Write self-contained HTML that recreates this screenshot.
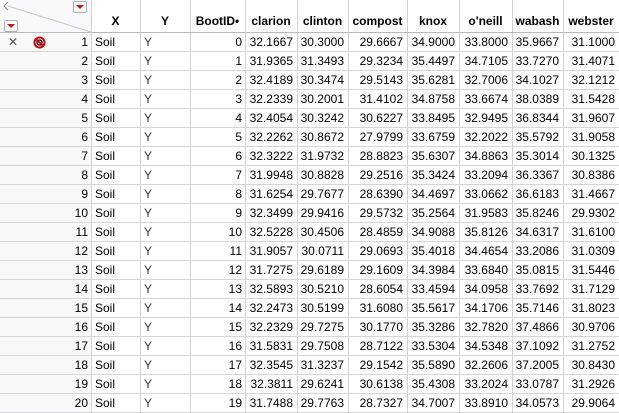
<!DOCTYPE html>
<html><head><meta charset="utf-8"><style>
body{margin:0;width:619px;height:412px;overflow:hidden;background:#fff;font-family:"Liberation Sans",sans-serif;font-size:12px;color:#000;position:relative}
.v{position:absolute;top:0;height:412px;width:1px;background:#d0d0d8}
.h{position:absolute;left:0;width:619px;height:1px;background:#d4d4dc}
.c{position:absolute;height:19px;line-height:19px;white-space:nowrap}
.hd{position:absolute;top:11px;height:20px;line-height:20px;font-weight:bold;text-align:center;font-size:12px}
.dd{position:absolute;width:12px;height:10px;border:1px solid #b0b0b0;border-radius:2px;background:#fff}
.dd:after{content:"";position:absolute;left:2px;top:3px;border-left:4px solid transparent;border-right:4px solid transparent;border-top:4px solid #d01010}
</style></head><body>
<div style="position:absolute;left:0;top:0;width:91px;height:412px;background:#f8f8f8"></div>
<svg style="position:absolute;left:0;top:0" width="92" height="33"><line x1="8" y1="6" x2="91" y2="32" stroke="#c8c8d0"/><path d="M8 2 L4 6 L8 10" fill="none" stroke="#909090"/></svg>
<div class="dd" style="left:73px;top:1px"></div>
<div class="dd" style="left:4px;top:20px"></div>
<div id="g"></div>
<script>
const cols=[91,140,190,245,297,348,407,459,512,563,619];
const names=["X","Y","BootID•","clarion","clinton","compost","knox","o'neill","wabash","webster"];
const d=`32.1667 30.3000 29.6667 34.9000 33.8000 35.9667 31.1000
31.9365 31.3493 29.3234 35.4497 34.7105 33.7270 31.4071
32.4189 30.3474 29.5143 35.6281 32.7006 34.1027 32.1212
32.2339 30.2001 31.4102 34.8758 33.6674 38.0389 31.5428
32.4054 30.3242 30.6227 33.8495 32.9495 36.8344 31.9607
32.2262 30.8672 27.9799 33.6759 32.2022 35.5792 31.9058
32.3222 31.9732 28.8823 35.6307 34.8863 35.3014 30.1325
31.9948 30.8828 29.2516 35.3424 33.2094 36.3367 30.8386
31.6254 29.7677 28.6390 34.4697 33.0662 36.6183 31.4667
32.3499 29.9416 29.5732 35.2564 31.9583 35.8246 29.9302
32.5228 30.4506 28.4859 34.9088 35.8126 34.6317 31.6100
31.9057 30.0711 29.0693 35.4018 34.4654 33.2086 31.0309
31.7275 29.6189 29.1609 34.3984 33.6840 35.0815 31.5446
32.5893 30.5210 28.6054 33.4594 34.0958 33.7692 31.7129
32.2473 30.5199 31.6080 35.5617 34.1706 35.7146 31.8023
32.2329 29.7275 30.1770 35.3286 32.7820 37.4866 30.9706
31.5831 29.7508 28.7122 33.5304 34.5348 37.1092 31.2752
32.3545 31.3237 29.1542 35.5890 32.2606 37.2005 30.8430
32.3811 29.6241 30.6138 35.4308 33.2024 33.0787 31.2926
31.7488 29.7763 28.7327 34.7007 33.8910 34.0573 29.9064`.split("\n").map(r=>r.split(" "));
let h="";
for(const x of cols.slice(0,-1))h+=`<div class="v" style="left:${x}px"></div>`;
h+=`<div class="h" style="top:32px;background:#b8b8c0"></div>`;
for(let i=1;i<=20;i++)h+=`<div class="h" style="top:${32+19*i}px"></div>`;
names.forEach((n,j)=>h+=`<div class="hd" style="left:${cols[j]}px;width:${cols[j+1]-cols[j]}px">${n}</div>`);
for(let i=0;i<20;i++){const t=33+19*i;
h+=`<div class="c" style="top:${t}px;left:0;width:88px;text-align:right">${i+1}</div>`;
h+=`<div class="c" style="top:${t}px;left:95px">Soil</div>`;
h+=`<div class="c" style="top:${t}px;left:144px;color:#334">Y</div>`;
h+=`<div class="c" style="top:${t}px;left:190px;width:52px;text-align:right">${i}</div>`;
d[i].forEach((v,j)=>h+=`<div class="c" style="top:${t}px;left:${cols[j+3]}px;width:${cols[j+4]-cols[j+3]-4}px;text-align:right">${v}</div>`);}
h+=`<div class="c" style="top:33px;left:8px;color:#555">✕</div>`;
h+=`<svg style="position:absolute;left:33px;top:36px" width="13" height="13"><circle cx="6.5" cy="6.5" r="5" fill="#fff" stroke="#c00" stroke-width="2"/><circle cx="6.5" cy="6.5" r="2.5" fill="none" stroke="#000" stroke-width="1.3"/><line x1="3" y1="3" x2="10" y2="10" stroke="#c00" stroke-width="1.8"/></svg>`;
document.getElementById("g").innerHTML=h;
</script>
</body></html>
